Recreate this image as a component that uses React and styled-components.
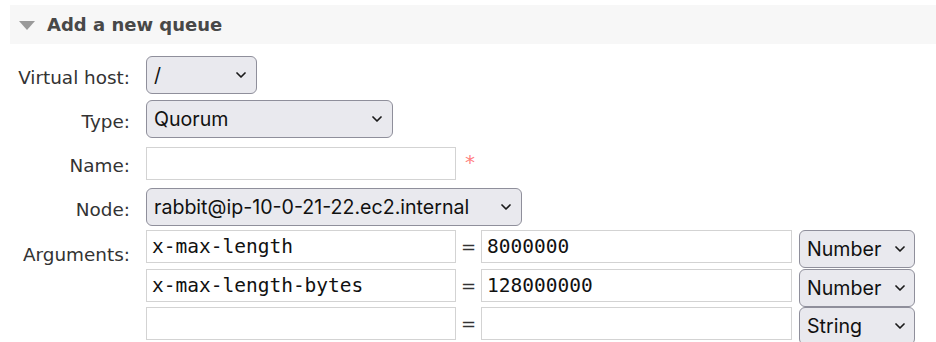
import React from "react";
import styled, { createGlobalStyle } from "styled-components";

const Global = createGlobalStyle`
  html, body { margin: 0; padding: 0; background: #fff; }
  body { font-family: "DejaVu Sans", Verdana, sans-serif; color: #333; }
  * { box-sizing: border-box; }
`;

const Page = styled.div`
  padding: 5px 0 0 10px;
  width: 936px;
  height: 342px;
  overflow: hidden;
`;

const SectionHeader = styled.div`
  display: flex;
  align-items: center;
  height: 39px;
  background: #f7f7f7;
  padding-left: 9px;
  gap: 12px;
`;

const Toggle = styled.span`
  width: 0;
  height: 0;
  border-left: 8.5px solid transparent;
  border-right: 8.5px solid transparent;
  border-top: 9px solid #9a9a9a;
  margin-top: 1px;
`;

const Title = styled.h2`
  margin: 0;
  font-family: "DejaVu Sans", Verdana, sans-serif;
  font-weight: bold;
  font-size: 18px;
  color: #484848;
`;

const Form = styled.div`
  display: flex;
  flex-direction: column;
  gap: 6px;
  padding-top: 12px;
  margin-left: -10px;
`;

const Row = styled.div`
  display: flex;
  align-items: ${(p) => (p.$top ? "flex-start" : "center")};
  gap: 16px;
  min-height: 38px;
  margin-top: ${(p) => p.$shift || 0}px;
`;

const Label = styled.label`
  width: 130px;
  flex: none;
  text-align: right;
  font-size: 18.4px;
  color: #333;
  padding-top: ${(p) => (p.$top ? "14px" : "5px")};
`;

const SelectWrap = styled.div`
  position: relative;
  width: ${(p) => p.$w}px;
  height: 38px;
  flex: none;
`;

const NativeSelect = styled.select`
  appearance: none;
  -webkit-appearance: none;
  width: 100%;
  height: 100%;
  margin: 0;
  padding: 0 24px 0 7px;
  border: 1px solid #8f8f9b;
  border-radius: 6px;
  background: #e9e9ee;
  color: #111;
  font-family: Inter, "Noto Sans", sans-serif;
  font-size: 19.6px;
  outline: none;
`;

const Chevron = styled.svg`
  position: absolute;
  right: ${(p) => p.$r || 11}px;
  top: 16px;
  pointer-events: none;
`;

const TextInput = styled.input`
  width: ${(p) => p.$w}px;
  height: 33px;
  flex: none;
  margin: 0;
  padding: 0 5px;
  border: 1.5px solid #d3d3d3;
  background: #fff;
  color: #111;
  font-family: ${(p) => (p.$mono ? '"DejaVu Sans Mono", Menlo, monospace' : "Inter, sans-serif")};
  font-size: ${(p) => (p.$mono ? "19.5px" : "19px")};
  outline: none;
`;

const Required = styled.span`
  color: #ff7f7f;
  font-size: 20px;
  margin-left: -7px;
  align-self: flex-start;
  margin-top: 6px;
`;

const ArgList = styled.div`
  display: flex;
  flex-direction: column;
`;

const ArgRow = styled.div`
  display: flex;
  align-items: flex-start;
  height: 38.5px;
`;

const Equals = styled.span`
  width: 25px;
  flex: none;
  text-align: center;
  font-size: 18px;
  color: #333;
  line-height: 33px;
`;

const Gap = styled.span`
  width: 7px;
  flex: none;
`;

function Select({ w, value, options, r }) {
  return (
    <SelectWrap $w={w}>
      <NativeSelect defaultValue={value}>
        {options.map((o) => (
          <option key={o}>{o}</option>
        ))}
      </NativeSelect>
      <Chevron $r={r} width="10" height="6" viewBox="0 0 10 6">
        <polyline points="1,1 5,5 9,1" fill="none" stroke="#1a1a1a" strokeWidth="1.7" strokeLinecap="round" strokeLinejoin="round" />
      </Chevron>
    </SelectWrap>
  );
}

const args = [
  { k: "x-max-length", v: "8000000", t: "Number" },
  { k: "x-max-length-bytes", v: "128000000", t: "Number" },
  { k: "", v: "", t: "String" },
];

export default function App() {
  return (
    <>
      <Global />
      <Page>
        <SectionHeader>
          <Toggle />
          <Title>Add a new queue</Title>
        </SectionHeader>
        <Form>
          <Row>
            <Label>Virtual host:</Label>
            <Select w={111} value="/" options={["/"]} />
          </Row>
          <Row>
            <Label>Type:</Label>
            <Select w={247} value="Quorum" options={["Classic", "Quorum", "Stream"]} />
          </Row>
          <Row>
            <Label>Name:</Label>
            <TextInput $w={310} defaultValue="" />
            <Required>*</Required>
          </Row>
          <Row>
            <Label>Node:</Label>
            <Select w={376} value="rabbit@ip-10-0-21-22.ec2.internal" options={["rabbit@ip-10-0-21-22.ec2.internal"]} />
          </Row>
          <Row $top $shift={-2}>
            <Label $top>Arguments:</Label>
            <ArgList>
              {args.map((a, i) => (
                <ArgRow key={i}>
                  <TextInput $mono $w={310} defaultValue={a.k} />
                  <Equals>=</Equals>
                  <TextInput $mono $w={311} defaultValue={a.v} />
                  <Gap />
                  <Select w={116} value={a.t} r={10} options={["String", "Number", "Boolean", "List"]} />
                </ArgRow>
              ))}
            </ArgList>
          </Row>
        </Form>
      </Page>
    </>
  );
}
